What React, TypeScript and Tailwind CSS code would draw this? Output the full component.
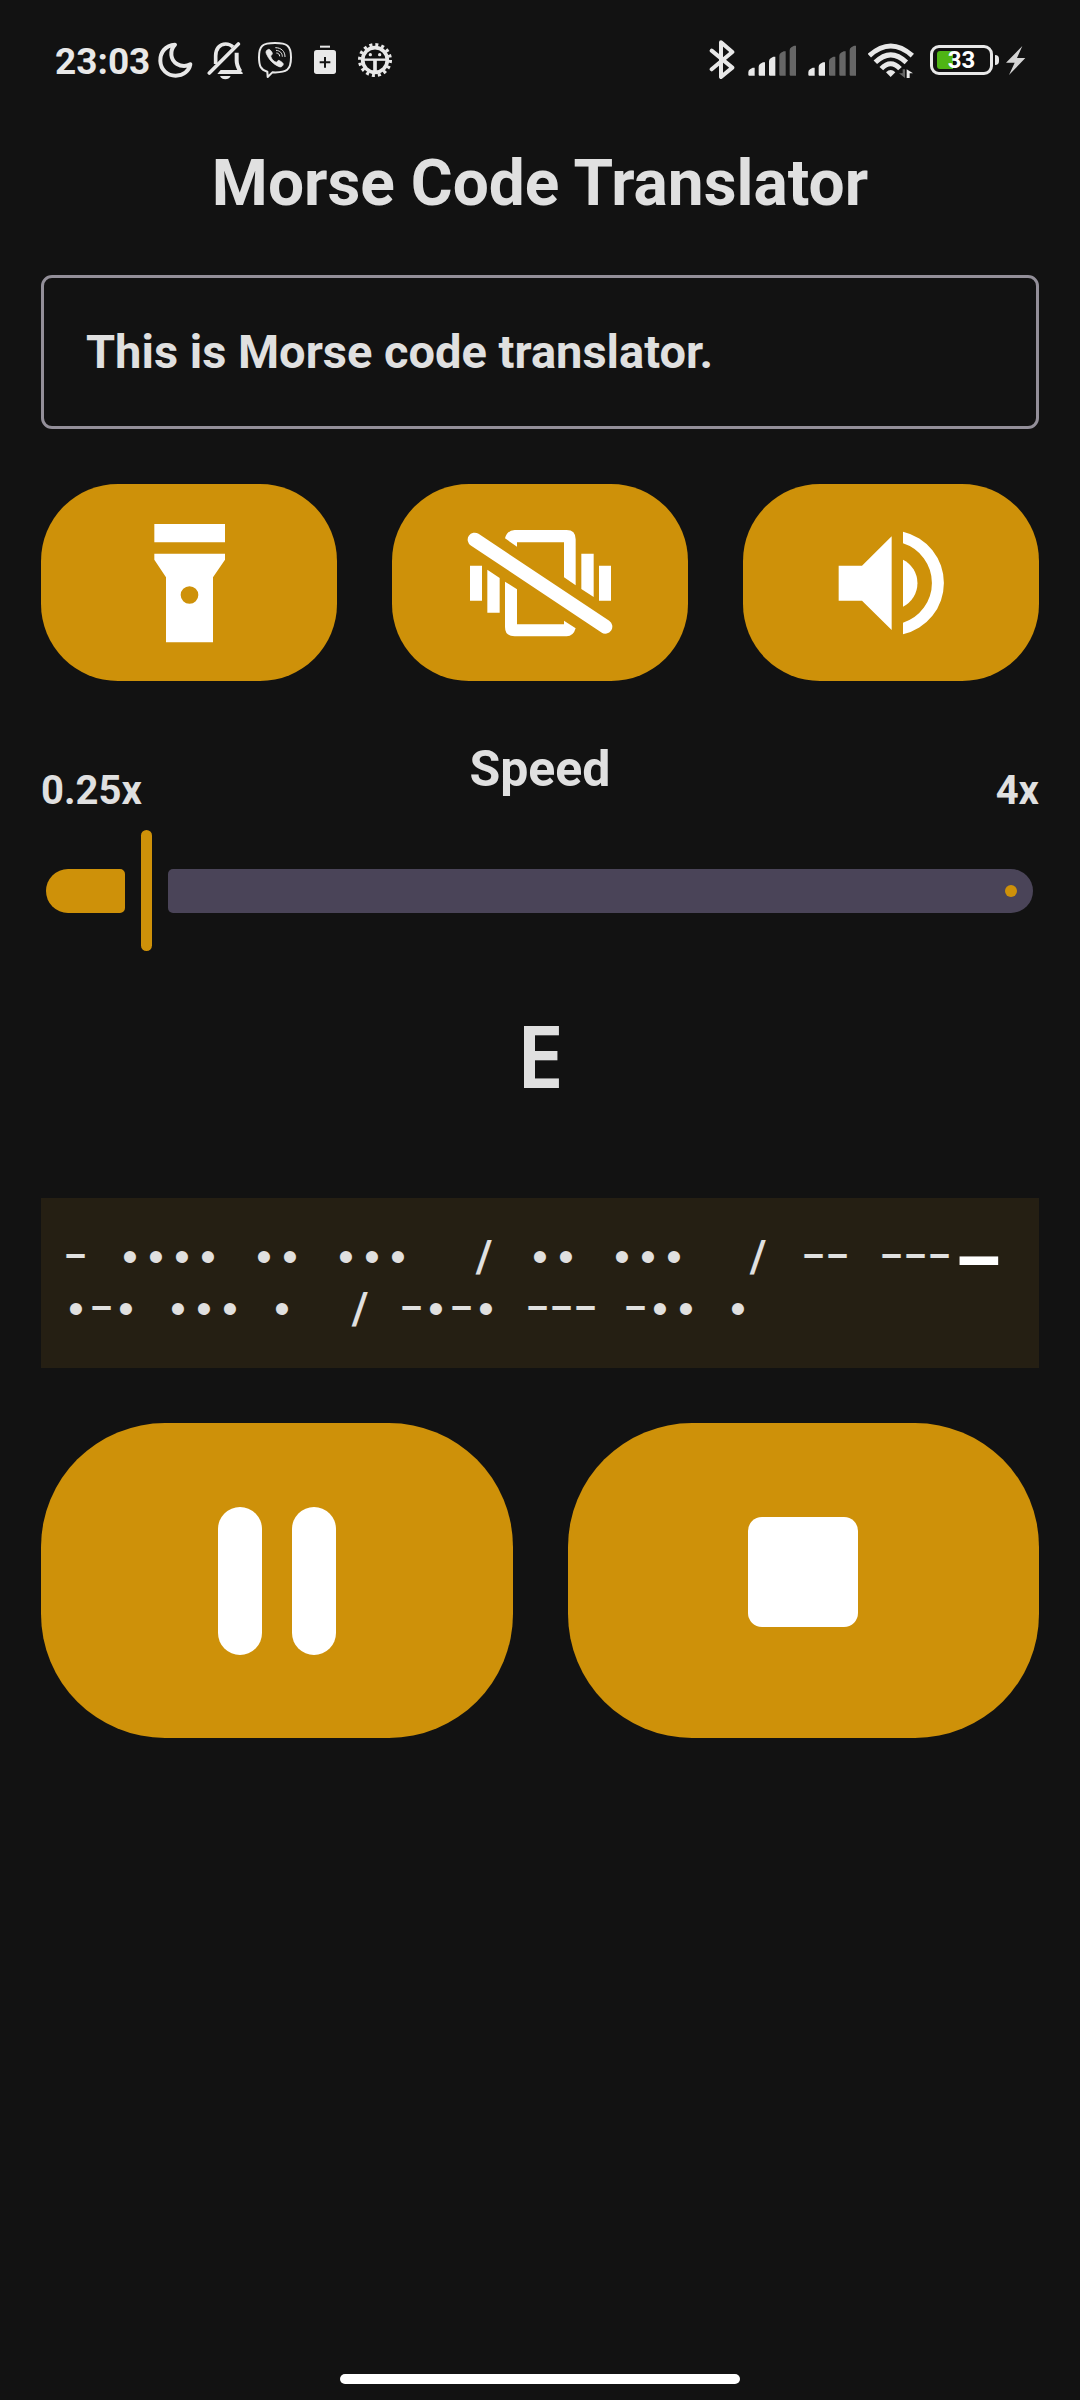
import { useState } from "react";

const bars = [0, 1, 2, 3, 4];

function Signal({ active }: { active: number }) {
  return (
    <svg viewBox="174 60 144 120" className="h-10 w-12" aria-label="Signal strength">
      {bars.map((i) => {
        const x = 175 + i * 31;
        const top = 143 - i * 16.5;
        return (
          <path
            key={i}
            d={`M${x} ${top + 14} Q${x} ${top + 8} ${x + 5} ${top + 5} L${x + 13} ${top} H${x + 19} V167 H${x + 3} Q${x} 167 ${x} 164 Z`}
            fill={i < active ? "#e8e8e8" : "#666666"}
          />
        );
      })}
    </svg>
  );
}

function StatusBar() {
  return (
    <header className="flex h-[120px] items-center justify-between pr-[54px] pl-[55px] text-[#e8e8e8]">
      <div className="flex items-center">
        <span className="pt-1 text-[37px] leading-10 font-bold">23:03</span>
        <div className="ml-[7px] flex items-center gap-[14px]">
          <svg viewBox="351 60 108 120" className="h-10 w-9" fill="none" stroke="currentColor" strokeWidth="12" strokeLinejoin="round">
            <path d="M405 74 C376 76 360 97 361 123 C362 149 382 167 407 167 C430 167 447 153 451 133 C441 139 424 140 411 132 C391 120 388 92 405 74 Z" />
          </svg>
          <svg viewBox="501 60 108 120" className="h-10 w-9" fill="none" stroke="currentColor">
            <path d="M527 132 V108 C527 86 539 72 557 72 C567 72 574 76 579 81" strokeWidth="11" />
            <path d="M508 159 L595 72" strokeWidth="11" strokeLinecap="round" />
            <path d="M590 98 V122 C590 134 593 141 601 154" strokeWidth="12" />
            <path d="M542 150 H600 L608 158 V162 H532 Z M540 168 H572 Q567 178 556 178 Q545 178 540 168 Z" fill="currentColor" stroke="none" />
          </svg>
          <svg viewBox="651 60 108 120" className="h-10 w-9" fill="none" stroke="currentColor">
            <path d="M705 69 C668 69 657 76 657 112 C657 137 662 150 682 155 L683 171 L697 157 C741 159 753 150 753 112 C753 76 741 69 705 69 Z" strokeWidth="6" strokeLinejoin="round" />
            <path d="M686 88 C679 90 676 95 679 101 C686 118 699 132 717 140 C724 143 729 138 730 132 C730 129 718 120 715 121 L709 127 C701 124 694 117 692 108 L697 102 C699 99 690 87 686 88 Z" fill="currentColor" stroke="currentColor" strokeWidth="2" />
            <path d="M706 83 C724 83 735 94 735 111 M708 91 C720 92 727 99 727 110 M709 99 C715 99 719 103 719 109" strokeWidth="3" />
          </svg>
          <svg viewBox="801 60 108 120" className="h-10 w-9" fill="currentColor">
            <path d="M840 77 H870 V83 H840 Z" />
            <rect x="822" y="90" width="66" height="72" rx="8" />
            <path d="M855 111 V143 M839 127 H871" stroke="#121212" strokeWidth="6" />
          </svg>
          <svg viewBox="951 60 108 120" className="h-10 w-9" fill="none" stroke="currentColor">
            <circle cx="1005" cy="120" r="46" strokeWidth="10" pathLength="160" strokeDasharray="5 5" />
            <circle cx="1005" cy="120" r="37" strokeWidth="11" />
            <path d="M972 119 H1038" strokeWidth="7" />
            <path d="M1005 118 V153" strokeWidth="11" />
            <circle cx="991" cy="104" r="5" fill="currentColor" stroke="none" />
            <circle cx="1019" cy="104" r="5" fill="currentColor" stroke="none" />
          </svg>
        </div>
      </div>

      <div className="flex items-center gap-3">
        <svg viewBox="57 60 81 120" className="h-10 w-[27px]" fill="none" stroke="currentColor" strokeWidth="12" strokeLinejoin="round" strokeLinecap="round">
          <path d="M65 92 L127 143 L93 171 V67 L127 96 L65 148" />
        </svg>
        <Signal active={3} />
        <Signal active={2} />
        <svg viewBox="537 60 138 120" className="h-10 w-[46px]" fill="none" stroke="currentColor" strokeWidth="15">
          <path d="M541 107 Q605 49 670 107" />
          <path d="M559 127 Q605 82 652 127" />
          <path d="M577 146 Q605 116 633 146" />
          <path d="M591 157 Q605 143 619 157 L605 171 Z" fill="currentColor" stroke="none" />
          <path d="M630 160 L641 160 V148 H648 V174 Z" fill="#666666" stroke="none" />
          <path d="M653 174 V148 L672 160 H662 V174 Z" fill="currentColor" stroke="none" />
        </svg>
        <div className="ml-1 flex items-center gap-[2px]">
          <div className="relative flex h-[30px] w-[63px] items-center justify-center rounded-[9px] border-[3px] border-[#e8e8e8]">
            <span className="absolute top-[3px] left-[4px] h-[18px] w-4 rounded-l-[3px] bg-[#4fb515]" />
            <span className="relative text-[24px] leading-6 font-bold text-white">33</span>
          </div>
          <span className="h-[10px] w-1 rounded-r-sm bg-[#e8e8e8]" />
          <svg viewBox="948 60 60 120" className="ml-[5px] h-10 w-5" fill="#d4d4d4">
            <path d="M997 78 L948 128 H974 L957 165 L1006 114 H981 Z" />
          </svg>
        </div>
      </div>
    </header>
  );
}

const amber =
  "flex cursor-pointer items-center justify-center bg-[#ce9109] text-white";

function OutputToggles() {
  return (
    <div className="mt-[55px] grid grid-cols-3 gap-[55px]">
      <button aria-label="Flashlight" className={`${amber} h-[197px] rounded-[77px]`}>
        <svg viewBox="372 157 213 360" className="h-[120px] w-[71px]" fill="currentColor">
          <path d="M373 160 H585 V215 H373 Z" />
          <path fillRule="evenodd" d="M373 249 H585 V267 L549 320 V515 H408 V320 L373 267 Z M452 373 A26.5 26.5 0 1 0 505 373 A26.5 26.5 0 1 0 452 373 Z" />
        </svg>
      </button>
      <button aria-label="Vibration off" className={`${amber} h-[197px] rounded-[77px]`}>
        <svg viewBox="258 169 444 336" className="h-28 w-[148px]" fill="currentColor">
          <path d="M284 207 L676 468" stroke="currentColor" strokeWidth="42" strokeLinecap="round" />
          <path d="M375 203 Q382 178 404 178 H560 Q587 178 587 206 V344 L552 320 V215 H411 V228 Z" />
          <path d="M375 333 L411 356 V461 H552 V450 L587 473 Q580 497 560 497 H404 Q375 497 375 469 Z" />
          <path d="M270 285 H306 V390 H270 Z M322 297 L359 322 V426 H322 Z M604 249 H641 V379 L604 355 Z M657 285 H693 V390 H657 Z" />
        </svg>
      </button>
      <button aria-label="Sound" className={`${amber} h-[197px] rounded-[77px]`}>
        <svg viewBox="321 175 324 324" className="h-[108px] w-[108px]" fill="currentColor">
          <path d="M326 285 H396 L485 197 V478 L396 390 H326 Z" />
          <path d="M519 267 A79 79 0 0 1 519 408 Z" />
          <path d="M519 183 A158 158 0 0 1 519 491 V456 A125 125 0 0 0 519 218 Z" />
        </svg>
      </button>
    </div>
  );
}

function SpeedSlider() {
  const [speed, setSpeed] = useState(0.63);
  const percent = ((speed - 0.25) / 3.75) * 100;
  return (
    <section className="mt-[58px]">
      <div className="grid h-[76px] grid-cols-3 text-[40px] leading-[48px] font-bold">
        <span className="self-end">0.25x</span>
        <label htmlFor="speed" className="text-center text-[50px] leading-[60px]">
          Speed
        </label>
        <span className="self-end text-right">4x</span>
      </div>
      <div className="relative mt-[15px] flex h-[121px] items-center pr-[6px] pl-[5px]">
        <span
          className="h-11 shrink-0 rounded-l-[22px] rounded-r-[5px] bg-[#ce9109]"
          style={{ width: `calc(${percent}% - 21px)` }}
        />
        <span className="mx-4 h-full w-[11px] shrink-0 rounded-full bg-[#ce9109]" />
        <span className="flex h-11 flex-1 items-center justify-end rounded-l-[5px] rounded-r-[22px] bg-[#4a4458] pr-4">
          <span className="size-3 rounded-full bg-[#ce9109]" />
        </span>
        <input
          id="speed"
          type="range"
          min={0.25}
          max={4}
          step={0.01}
          value={speed}
          onChange={(e) => setSpeed(Number(e.target.value))}
          className="absolute inset-0 h-full w-full cursor-pointer opacity-0"
        />
      </div>
    </section>
  );
}

function Morse({ code }: { code: string }) {
  return (
    <span className="flex">
      {code.split("").map((symbol, i) => {
        if (symbol === "_")
          return (
            <span key={i} className="flex w-[54px] justify-center pt-1 text-[76px] font-bold text-white">
              –
            </span>
          );
        if (symbol === "-")
          return (
            <span key={i} className="flex w-6 justify-center text-[36px] font-bold">
              –
            </span>
          );
        if (symbol === ".")
          return (
            <span key={i} className="flex w-[26px] justify-center font-['Liberation_Sans',sans-serif]">
              •
            </span>
          );
        return (
          <span key={i} className="flex w-[26px] justify-center font-semibold">
            {symbol}
          </span>
        );
      })}
    </span>
  );
}

export default function App() {
  const [text, setText] = useState("This is Morse code translator.");
  return (
    <div className="flex min-h-screen flex-col bg-[#121212] font-['Roboto',sans-serif] text-[#e0e0e0]">
      <StatusBar />
      <main className="flex flex-col px-[41px]">
        <h1 className="mt-7 text-center text-[64px] leading-[72px] font-bold">
          Morse Code Translator
        </h1>
        <input
          aria-label="Text to translate"
          value={text}
          onChange={(e) => setText(e.target.value)}
          className="mt-[55px] h-[154px] w-full rounded-[11px] border-[3px] border-[#938f99] bg-transparent px-[42px] pb-[2px] text-[47px] font-bold outline-none"
        />
        <OutputToggles />
        <SpeedSlider />
        <p className="mt-[52px] text-center font-['Noto_Sans',sans-serif] text-[86px] leading-[104px] font-semibold">E</p>
        <div className="mt-[91px] bg-[#251f13] px-[22px] pt-[33px] pb-[33px] text-[44px] leading-[52px]">
          <div className="flex h-[52px] gap-[30px]">
            <Morse code="-" />
            <Morse code="...." />
            <Morse code=".." />
            <Morse code="..." />
            <span className="ml-[30px] flex gap-[30px]">
              <Morse code="/" />
              <Morse code=".." />
              <Morse code="..." />
            </span>
            <span className="ml-7 flex gap-[30px]">
              <Morse code="/" />
              <Morse code="--" />
              <Morse code="---_" />
            </span>
          </div>
          <div className="flex h-[52px] gap-[26px]">
            <Morse code=".-." />
            <Morse code="..." />
            <Morse code="." />
            <span className="ml-[26px] flex gap-[26px]">
              <Morse code="/" />
              <Morse code="-.-." />
              <Morse code="---" />
              <Morse code="-.." />
              <Morse code="." />
            </span>
          </div>
        </div>
        <div className="mt-[55px] grid grid-cols-2 gap-[55px]">
          <button aria-label="Pause" className={`${amber} h-[315px] rounded-[124px]`}>
            <svg viewBox="0 0 118 148" className="h-[148px] w-[118px]" fill="currentColor">
              <rect width="44" height="148" rx="22" />
              <rect x="74" width="44" height="148" rx="22" />
            </svg>
          </button>
          <button aria-label="Stop" className={`${amber} h-[315px] rounded-[124px]`}>
            <svg viewBox="0 0 110 128" className="h-32 w-[110px]" fill="currentColor">
              <rect width="110" height="110" rx="14" />
            </svg>
          </button>
        </div>
      </main>
      <div className="mt-auto flex justify-center pt-10 pb-4">
        <span className="h-[10px] w-[400px] rounded-full bg-white" />
      </div>
    </div>
  );
}
